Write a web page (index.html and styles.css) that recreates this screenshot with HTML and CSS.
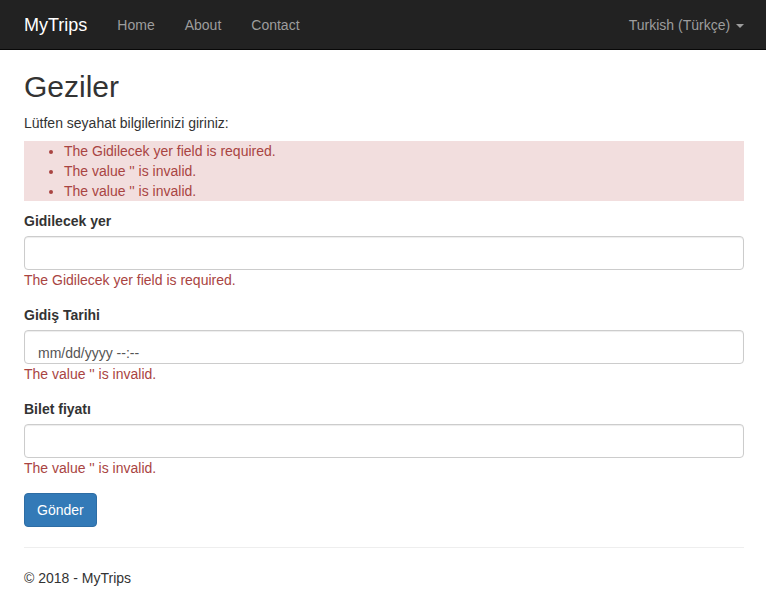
FILE: index.html
```html
<!DOCTYPE html>
<html lang="tr">
<head>
<meta charset="utf-8">
<title>Geziler - MyTrips</title>
<link rel="stylesheet" href="styles.css">
</head>
<body>
<nav class="navbar">
  <div class="nav-left">
    <a class="brand" href="#">MyTrips</a>
    <ul class="nav">
      <li><a href="#">Home</a></li>
      <li><a href="#">About</a></li>
      <li><a href="#">Contact</a></li>
    </ul>
  </div>
  <a class="lang" href="#">Turkish (Türkçe) <span class="caret"></span></a>
</nav>
<main class="content">
  <h2 class="title">Geziler</h2>
  <p class="intro">Lütfen seyahat bilgilerinizi giriniz:</p>
  <div class="summary">
    <ul>
      <li>The Gidilecek yer field is required.</li>
      <li>The value '' is invalid.</li>
      <li>The value '' is invalid.</li>
    </ul>
  </div>
  <form class="form">
    <div class="group">
      <label class="label">Gidilecek yer</label>
      <input class="input" type="text">
      <span class="error">The Gidilecek yer field is required.</span>
    </div>
    <div class="group">
      <label class="label">Gidiş Tarihi</label>
      <div class="input date">mm/dd/yyyy --:--</div>
      <span class="error">The value '' is invalid.</span>
    </div>
    <div class="group">
      <label class="label">Bilet fiyatı</label>
      <input class="input" type="text">
      <span class="error">The value '' is invalid.</span>
    </div>
    <button class="btn" type="button">Gönder</button>
  </form>
  <hr class="rule">
  <footer class="footer">
    <p>© 2018 - MyTrips</p>
  </footer>
</main>
</body>
</html>
```

FILE: styles.css
```css
* { box-sizing: border-box; }
html, body { margin: 0; padding: 0; }
body {
  font-family: "Liberation Sans", Arial, Helvetica, sans-serif;
  font-size: 14px;
  line-height: 20px;
  color: #333;
  background: #fff;
}
.navbar {
  height: 50px;
  background: #222;
  border-bottom: 1px solid #080808;
  display: flex;
  align-items: center;
  justify-content: space-between;
  padding: 0 22px 0 24px;
}
.nav-left { display: flex; align-items: center; }
.brand {
  color: #fff;
  font-size: 18px;
  line-height: 20px;
  text-decoration: none;
  padding-right: 15px;
}
.nav { list-style: none; margin: 0; padding: 0; display: flex; }
.nav a {
  display: block;
  color: #9d9d9d;
  text-decoration: none;
  padding: 0 15px;
  line-height: 20px;
}
.lang {
  color: #9d9d9d;
  text-decoration: none;
  line-height: 20px;
}
.caret {
  display: inline-block;
  width: 0;
  height: 0;
  margin-left: 2px;
  vertical-align: middle;
  border-top: 4px solid #9d9d9d;
  border-left: 4px solid transparent;
  border-right: 4px solid transparent;
}
.content { padding: 0 22px 0 24px; }
.title {
  font-size: 30px;
  font-weight: 500;
  line-height: 33px;
  margin: 20px 0 10px;
  font-family: "Liberation Sans", Arial, sans-serif;
}
.intro { margin: 0 0 8px; }
.summary {
  background: #f2dede;
  color: #a94442;
}
.summary ul { margin: 0 0 10px; padding: 0 0 0 40px; }
.summary li { line-height: 20px; }
.form { margin: 0; }
.group { margin-bottom: 15px; display: flex; flex-direction: column; }
.label {
  font-weight: bold;
  margin-bottom: 5px;
  line-height: 20px;
}
.input {
  display: block;
  width: 100%;
  height: 34px;
  padding: 6px 12px;
  font-family: inherit;
  font-size: 14px;
  color: #555;
  background: #fff;
  border: 1px solid #ccc;
  border-radius: 4px;
  box-shadow: inset 0 1px 1px rgba(0,0,0,.075);
  margin: 0;
}
.date {
  padding: 12px 13px 0;
  line-height: 20px;
  overflow: hidden;
}
.error { color: #a94442; line-height: 20px; }
.btn {
  display: block;
  height: 34px;
  padding: 6px 12px;
  font-family: inherit;
  font-size: 14px;
  line-height: 20px;
  color: #fff;
  background: #337ab7;
  border: 1px solid #2e6da4;
  border-radius: 4px;
}
.rule {
  border: 0;
  border-top: 1px solid #eee;
  margin: 20px 0;
}
.footer p { margin: 0 0 10px; }
```
